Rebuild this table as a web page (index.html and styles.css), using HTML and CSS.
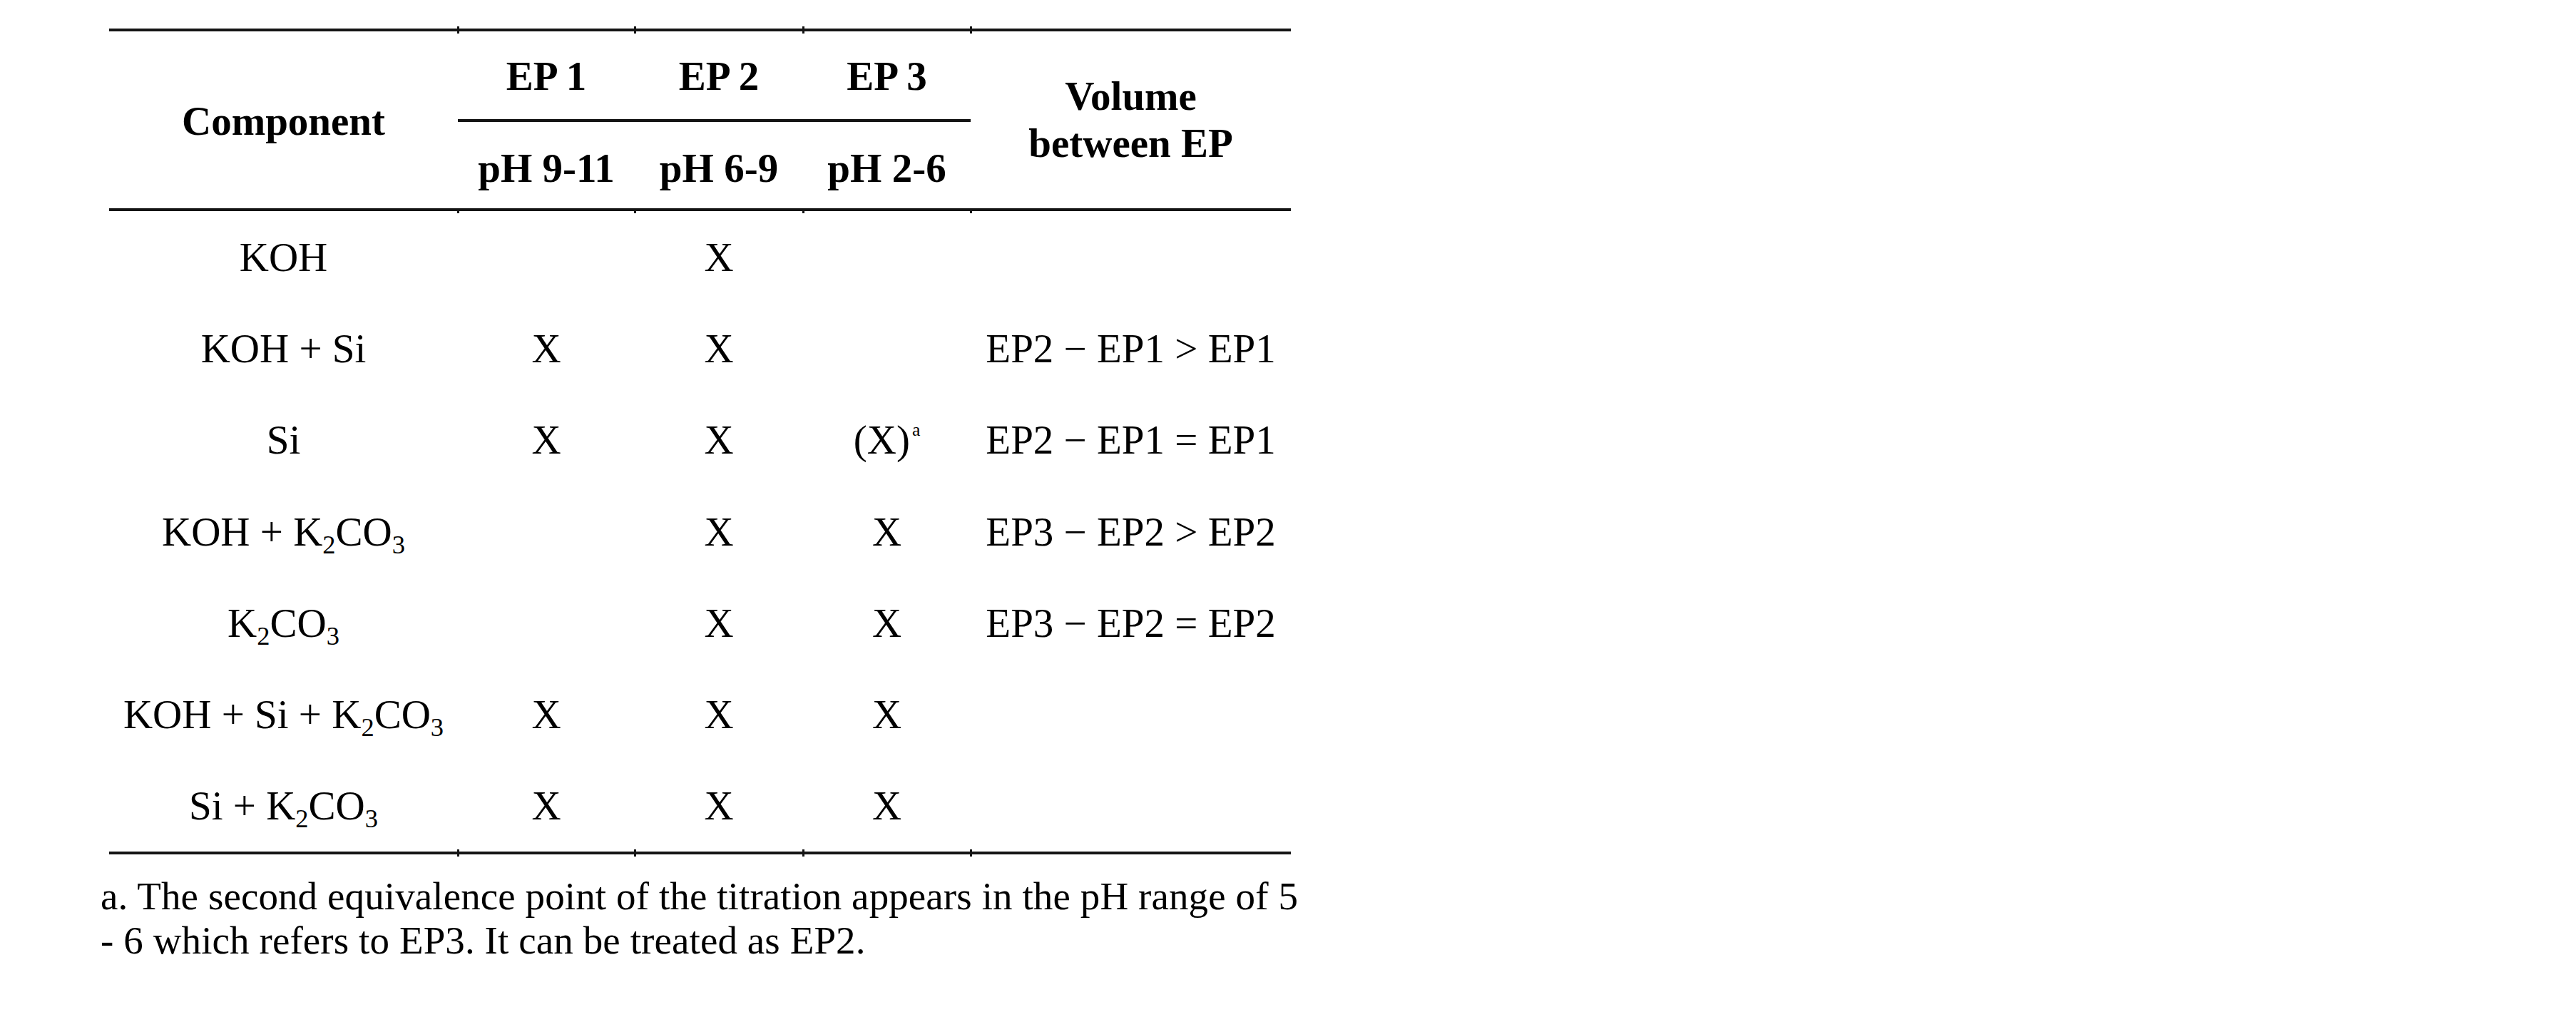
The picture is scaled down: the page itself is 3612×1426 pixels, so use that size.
FILE: index.html
```html
<!DOCTYPE html>
<html lang="en">
<head>
<meta charset="utf-8">
<title>Titration components</title>
<link rel="stylesheet" href="styles.css">
</head>
<body>
<div class="page">
  <div class="tbl">
    <div class="cell head comp">Component</div>
    <div class="cell head ep tick-top">EP 1</div>
    <div class="cell head ep tick-top">EP 2</div>
    <div class="cell head ep tick-top">EP 3</div>
    <div class="cell head vol tick-top tick-mid"><span>Volume<br>between EP</span></div>
    <div class="cell head ph tick-mid">pH 9-11</div>
    <div class="cell head ph tick-mid">pH 6-9</div>
    <div class="cell head ph tick-mid">pH 2-6</div>

    <div class="cell">KOH</div>
    <div class="cell"></div>
    <div class="cell">X</div>
    <div class="cell"></div>
    <div class="cell"></div>

    <div class="cell">KOH + Si</div>
    <div class="cell">X</div>
    <div class="cell">X</div>
    <div class="cell"></div>
    <div class="cell">EP2 − EP1 &gt; EP1</div>

    <div class="cell">Si</div>
    <div class="cell">X</div>
    <div class="cell">X</div>
    <div class="cell"><span>(X)<span class="sup">a</span></span></div>
    <div class="cell">EP2 − EP1 = EP1</div>

    <div class="cell"><span>KOH + K<span class="sub">2</span>CO<span class="sub">3</span></span></div>
    <div class="cell"></div>
    <div class="cell">X</div>
    <div class="cell">X</div>
    <div class="cell">EP3 − EP2 &gt; EP2</div>

    <div class="cell"><span>K<span class="sub">2</span>CO<span class="sub">3</span></span></div>
    <div class="cell"></div>
    <div class="cell">X</div>
    <div class="cell">X</div>
    <div class="cell">EP3 − EP2 = EP2</div>

    <div class="cell"><span>KOH + Si + K<span class="sub">2</span>CO<span class="sub">3</span></span></div>
    <div class="cell">X</div>
    <div class="cell">X</div>
    <div class="cell">X</div>
    <div class="cell"></div>

    <div class="cell"><span>Si + K<span class="sub">2</span>CO<span class="sub">3</span></span></div>
    <div class="cell tick-bot">X</div>
    <div class="cell tick-bot">X</div>
    <div class="cell tick-bot">X</div>
    <div class="cell tick-bot"></div>
  </div>
  <p class="note">
    <span class="line">a. The second equivalence point of the titration appears in the pH range of 5</span>
    <span class="line">- 6 which refers to EP3. It can be treated as EP2.</span>
  </p>
</div>
</body>
</html>
```
FILE: styles.css
```css
html, body {
  margin: 0;
  padding: 0;
  background: #ffffff;
}

body {
  color: #000000;
  font-family: "Liberation Serif", "Times New Roman", serif;
}

.page {
  padding: 40px 0 0 141px;
}

.tbl {
  display: grid;
  grid-template-columns: 489px 248px 236px 235px 449px;
  grid-template-rows: 127px 125px repeat(7, 128.3px);
  width: 1657px;
  margin-left: 12px;
  border-top: 4px solid #141414;
  border-bottom: 4px solid #141414;
  font-size: 57px;
}

.cell {
  position: relative;
  box-sizing: border-box;
  display: flex;
  align-items: center;
  justify-content: center;
  text-align: center;
  white-space: nowrap;
}

.head {
  font-weight: bold;
}

.comp {
  grid-column: 1;
  grid-row: 1 / 3;
  border-bottom: 4px solid #141414;
  padding-top: 2px;
}

.vol {
  grid-column: 5;
  grid-row: 1 / 3;
  border-bottom: 4px solid #141414;
  line-height: 66px;
}

.ep {
  border-bottom: 4px solid #141414;
  padding-top: 2px;
}

.ph {
  border-bottom: 4px solid #141414;
  padding-top: 7px;
}

.sup {
  font-size: 0.45em;
  vertical-align: 1em;
  line-height: 0;
  margin-left: 3px;
}

.sub {
  font-size: 0.64em;
  vertical-align: -0.3em;
  line-height: 0;
}

/* small marks where the column edges meet the rules */
.tick-top::before {
  content: "";
  position: absolute;
  left: -1px;
  top: -7px;
  width: 3px;
  height: 10px;
  background: #141414;
}

.tick-mid::after {
  content: "";
  position: absolute;
  left: -1px;
  bottom: -7px;
  width: 3px;
  height: 7px;
  background: #141414;
}

.tick-bot::after {
  content: "";
  position: absolute;
  left: -1px;
  bottom: -7px;
  width: 3px;
  height: 10px;
  background: #141414;
}

.note {
  margin: 28px 0 0 0;
  font-size: 55px;
  line-height: 62px;
  letter-spacing: 0.1px;
}

.line {
  display: block;
  white-space: nowrap;
}
```
